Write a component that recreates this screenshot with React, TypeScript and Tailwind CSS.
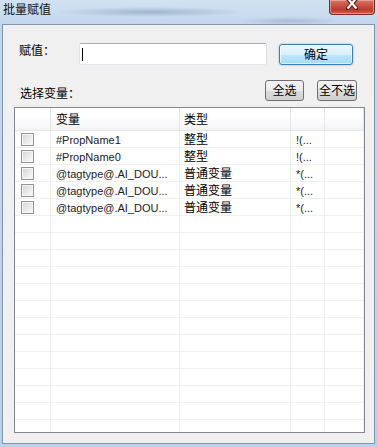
import React from 'react';

const FONT = { fontFamily: '"Liberation Sans", "Noto Sans CJK SC", sans-serif' };

function Checkbox() {
  return (
    <div className="w-[13px] h-[13px] border border-[#939393] bg-[#f6f6f6] p-[1px]">
      <div className="w-full h-full bg-[linear-gradient(135deg,#d8d8d8,#f8f8f8)]" />
    </div>
  );
}

function GrayButton({ label, w }: { label: string; w: string }) {
  return (
    <div
      className={`${w} h-[21px] rounded-[3px] border border-[#707070] bg-[linear-gradient(180deg,#f2f2f2_0%,#ebebeb_50%,#dddddd_51%,#cfcfcf_100%)] flex items-center justify-center text-[12px] leading-[14px] text-black`}
    >
      {label}
    </div>
  );
}

export default function App() {
  const rows = [
    { name: '#PropName1', type: '整型', v: '!(...' },
    { name: '#PropName0', type: '整型', v: '!(...' },
    { name: '@tagtype@.AI_DOU...', type: '普通变量', v: '*(...' },
    { name: '@tagtype@.AI_DOU...', type: '普通变量', v: '*(...' },
    { name: '@tagtype@.AI_DOU...', type: '普通变量', v: '*(...' },
  ];
  const empties = Array.from({ length: 14 });
  const colClasses = [
    'w-[36px] border-r border-[#f0f0f0]',
    'w-[129px] border-r border-[#f0f0f0]',
    'w-[111px] border-r border-[#f0f0f0]',
    'w-[34px] border-r border-[#f0f0f0]',
    'w-[39px] border-r border-[#f0f0f0]',
  ];

  return (
    <div
      className="w-[378px] h-[447px] overflow-hidden flex flex-col bg-[linear-gradient(180deg,#d3e2f2_0%,#c2d7ed_24px,#b9d1eb_100%)]"
      style={FONT}
    >
      {/* Title bar */}
      <div className="h-[24px] flex items-start justify-between bg-[radial-gradient(ellipse_95px_5px_at_150px_12px,#9fb5cd,transparent),radial-gradient(ellipse_50px_4px_at_290px_21px,#a8bdd4,transparent)]">
        <div className="pl-[3px] pt-[3px] text-[12px] leading-[14px] text-[#111]">批量赋值</div>
        <div className="mr-[3px] w-[46px] h-[15px] rounded-b-[4px] border border-t-0 border-[#7a2b22] bg-[linear-gradient(180deg,#d57869_0%,#c6493a_50%,#b83a2c_70%,#d4614c_100%)] flex justify-center shadow-[inset_0_0_0_1px_rgba(255,200,190,0.5)]">
          <svg width="12" height="10" viewBox="0 0 12 10">
            <path d="M1 -2 L11 9 M11 -2 L1 9" stroke="#5a1a14" strokeWidth="4" strokeLinecap="square" />
            <path d="M1.5 -2 L10.5 8.5 M10.5 -2 L1.5 8.5" stroke="#ffffff" strokeWidth="2.2" />
          </svg>
        </div>
      </div>

      {/* Client frame */}
      <div className="flex-1 flex pl-[2px] pr-[3px] pb-[3px]">
        <div className="flex-1 border border-[#8495aa] bg-[#f0f0f0] flex flex-col text-black">
          {/* Row 1 */}
          <div className="mt-[18px] h-[22px] flex items-start pl-[16px]">
            <div className="w-[60px] mt-[1px] text-[12px] leading-[14px]">赋值：</div>
            <div className="w-[188px] h-[22px] rounded-[2px] border border-[#abadb3] border-l-[#e2e3ea] border-r-[#dbdfe6] border-b-[#e3e9ef] bg-white flex items-center pl-[2px]">
              <div className="w-[1px] h-[13px] bg-black" />
            </div>
            <div className="ml-[12px] mt-[1px] w-[74px] h-[21px] rounded-[3px] border border-[#3c7fb1] bg-[linear-gradient(180deg,#eaf6fd_0%,#d9f0fc_50%,#bee6fd_51%,#a7d9f5_100%)] shadow-[inset_0_0_0_1px_rgba(255,255,255,0.6),0_0_2px_#6fb4e4] flex items-center justify-center text-[12px] leading-[14px]">
              确定
            </div>
          </div>

          {/* Row 2 */}
          <div className="mt-[15px] h-[21px] flex items-end pl-[17px] pr-[17px]">
            <div className="text-[12px] leading-[14px]">选择变量：</div>
            <div className="ml-auto flex gap-[13px] self-stretch">
              <GrayButton label="全选" w="w-[39px]" />
              <GrayButton label="全不选" w="w-[40px]" />
            </div>
          </div>

          {/* Table */}
          <div className="mt-[6px] ml-[11px] w-[351px] h-[326px] border border-[#828790] bg-white overflow-hidden flex flex-col">
            <div className="h-[23px] flex shrink-0 border-b border-[#e5e5e5] bg-[linear-gradient(180deg,#ffffff_0%,#ffffff_40%,#f2f3f5_100%)]">
              <div className="w-[36px] border-r border-[#e5e5e5]" />
              <div className="w-[129px] border-r border-[#e5e5e5] pl-[5px] text-[12px] leading-[14px] pt-[5px]">变量</div>
              <div className="w-[111px] border-r border-[#e5e5e5] pl-[4px] text-[12px] leading-[14px] pt-[5px]">类型</div>
              <div className="w-[34px] border-r border-[#e5e5e5]" />
              <div className="w-[39px] border-r border-[#e5e5e5]" />
            </div>
            {rows.map((r, i) => (
              <div key={i} className="h-[17px] flex shrink-0 border-b border-[#f0f0f0]">
                <div className={`${colClasses[0]} pl-[6px] pt-[2px]`}>
                  <Checkbox />
                </div>
                <div className={`${colClasses[1]} pl-[5px] text-[11px] leading-[14px] pt-[2px] text-[#222] whitespace-nowrap overflow-hidden`}>
                  {r.name}
                </div>
                <div className={`${colClasses[2]} pl-[4px] text-[12px] leading-[14px] pt-[2px] whitespace-nowrap overflow-hidden`}>
                  {r.type}
                </div>
                <div className={`${colClasses[3]} pl-[5px] text-[11px] leading-[14px] pt-[2px] text-[#222] whitespace-nowrap overflow-hidden`}>
                  {r.v}
                </div>
                <div className={colClasses[4]} />
              </div>
            ))}
            {empties.map((_, i) => (
              <div key={`e${i}`} className="h-[17px] flex shrink-0 border-b border-[#f0f0f0]">
                {colClasses.map((c, j) => (
                  <div key={j} className={c} />
                ))}
              </div>
            ))}
          </div>
        </div>
      </div>
    </div>
  );
}
